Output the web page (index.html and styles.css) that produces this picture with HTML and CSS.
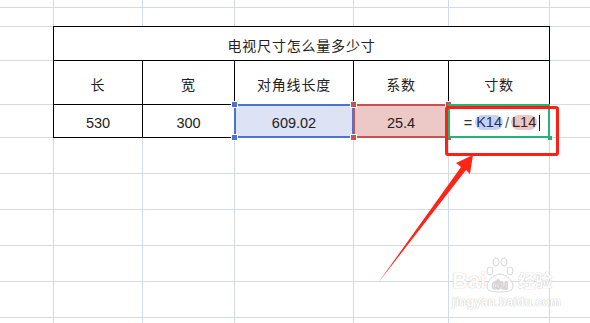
FILE: index.html
```html
<!DOCTYPE html>
<html lang="zh-CN">
<head>
<meta charset="utf-8">
<title>电视尺寸怎么量多少寸</title>
<link rel="stylesheet" href="styles.css">
</head>
<body>
<div class="sheet">
  <div class="tbl">
    <div class="t title">电视尺寸怎么量多少寸</div>
    <div class="t">长</div>
    <div class="t">宽</div>
    <div class="t">对角线长度</div>
    <div class="t">系数</div>
    <div class="t">寸数</div>
    <div class="t num">530</div>
    <div class="t num">300</div>
    <div class="t num ref-blue">609.02<span class="sel sel-blue"><i class="h tl"></i><i class="h bl"></i></span></div>
    <div class="t num ref-red">25.4<span class="sel sel-red"><i class="h tl"></i><i class="h bl"></i><i class="h tr"></i><i class="h br"></i></span></div>
    <div class="t num edit"><span class="formula"><span class="eq">=</span><span class="pill pill-blue">K14</span><span class="slash">/</span><span class="pill pill-red">L14</span><span class="caret"></span></span><span class="sel sel-green"><i class="h br"></i></span></div>
  </div>

  <div class="c"></div><div class="c"></div><div class="c"></div><div class="c"></div><div class="c"></div><div class="c"></div><div class="c"></div>
  <div class="c"></div><div class="c"></div><div class="c"></div><div class="c"></div><div class="c"></div><div class="c"></div><div class="c"></div>
  <div class="c"></div><div class="c"></div>
  <div class="c"></div><div class="c"></div>
  <div class="c"></div><div class="c"></div>
  <div class="c"></div><div class="c"></div><div class="c"></div><div class="c"></div><div class="c"></div><div class="c"></div><div class="c"></div>
  <div class="c"></div><div class="c"></div><div class="c"></div><div class="c"></div><div class="c"></div><div class="c"></div><div class="c"></div>
  <div class="c"></div><div class="c"></div><div class="c"></div><div class="c"></div><div class="c"></div><div class="c"></div><div class="c"></div>
  <div class="c"></div><div class="c"></div><div class="c"></div><div class="c"></div><div class="c"></div><div class="c"></div><div class="c"></div>
  <div class="c"></div><div class="c"></div><div class="c"></div><div class="c"></div><div class="c"></div><div class="c"></div><div class="c"></div>
  <div class="c"></div><div class="c"></div><div class="c"></div><div class="c"></div><div class="c"></div><div class="c"></div><div class="c"></div>

  <div class="callout"></div>
  <svg class="arrow" width="590" height="323" viewBox="0 0 590 323">
    <polygon points="378,283 461,167 456,163 473,155 470,174 466,170" fill="#ff2416"/>
  </svg>

  <div class="wm">
    <div class="wm-top">
      <span class="wm-bai">Bai</span>
      <svg class="wm-paw" width="28" height="36" viewBox="0 0 28 36">
        <g fill="#fff" stroke="#d2d2d2" stroke-width="1">
          <ellipse cx="4" cy="14" rx="3" ry="4"/>
          <ellipse cx="10" cy="5" rx="3" ry="4"/>
          <ellipse cx="18" cy="5" rx="3" ry="4"/>
          <ellipse cx="24" cy="14" rx="3" ry="4"/>
          <path d="M14 17 C20 17 27 24 27 29 C27 34 22 35 14 35 C6 35 1 34 1 29 C1 24 8 17 14 17 Z"/>
        </g>
        <text x="14" y="32" text-anchor="middle" class="wm-du">du</text>
      </svg>
      <span class="wm-jy">经验</span>
    </div>
    <div class="wm-url">jingyan.baidu.com</div>
  </div>
</div>
</body>
</html>
```

FILE: styles.css
```css
html, body {
  margin: 0;
  padding: 0;
  background: #fff;
  overflow: hidden;
}

.sheet {
  position: relative;
  width: 590px;
  height: 323px;
  display: grid;
  grid-template-columns: 53px 88px 91px 118px 94px 100px 40px;
  grid-template-rows: 7px 18px 33px 43px 32px repeat(5, 35px) 5px;
  gap: 1px;
  background: #d5dbe6;
  font-family: "Liberation Sans", "Noto Sans CJK SC", sans-serif;
  color: #222;
}

.c {
  background: #fff;
}

.tbl {
  grid-column: 2 / 7;
  grid-row: 3 / 6;
  margin: -1px;
  border: 1px solid #000;
  background: #000;
  display: grid;
  grid-template-columns: 88px 91px 118px 94px 100px;
  grid-template-rows: 33px 43px 32px;
  gap: 1px;
}

.t {
  position: relative;
  background: #fff;
  display: flex;
  align-items: center;
  justify-content: center;
  padding-top: 3px;
  box-sizing: border-box;
  font-size: 14px;
  letter-spacing: 0.8px;
}

.title {
  grid-column: 1 / -1;
}

.num {
  font-size: 14.5px;
  letter-spacing: 0;
}

.ref-blue {
  background: #dde3f5;
}

.ref-red {
  background: #ecc8c7;
}

.sel {
  position: absolute;
  left: -1px;
  top: -1px;
  right: -1px;
  bottom: -1px;
  border: 2px solid;
}

.sel-blue { border-color: #4b74d2; color: #4b74d2; }
.sel-red { border-color: #c8524e; color: #c8524e; }
.sel-green { border-color: #22b574; color: #22b574; }

.h {
  position: absolute;
  width: 5px;
  height: 5px;
  background: currentColor;
  border: 1px solid #fff;
}
.h.tl { left: -5px; top: -5px; }
.h.bl { left: -5px; bottom: -5px; }
.h.tr { right: -5px; top: -5px; }
.h.br { right: -5px; bottom: -5px; }
.sel-green .h.br { right: -4px; bottom: -4px; width: 4px; height: 4px; border: 0; }

.formula {
  display: flex;
  align-items: center;
  margin-left: 6px;
  font-size: 14.5px;
}

.eq {
  margin-right: 3px;
  color: #333;
}

.pill {
  display: inline-block;
  height: 15px;
  line-height: 15px;
  padding: 0 1px;
  border-radius: 8px;
}

.pill-blue {
  background: #c3d1f2;
  color: #1e2f6a;
}

.pill-red {
  background: #eac6c5;
  color: #3a2222;
}

.slash {
  margin: 0 2px;
  color: #555;
}

.caret {
  display: inline-block;
  width: 1px;
  height: 16px;
  background: #111;
  margin-left: 2px;
}

.callout {
  position: absolute;
  left: 445px;
  top: 106px;
  width: 114px;
  height: 50px;
  box-sizing: border-box;
  border: 3px solid #ff1f14;
  border-radius: 3px;
}

.arrow {
  position: absolute;
  left: 0;
  top: 0;
  pointer-events: none;
}

.wm {
  position: absolute;
  left: 452px;
  top: 257px;
  color: #fff;
  font-family: "Liberation Sans", "Noto Sans CJK SC", sans-serif;
  font-weight: bold;
  text-shadow: 0 0 1px #bcbcbc, 0 0 1px #bcbcbc;
  opacity: 0.85;
}

.wm-top {
  display: flex;
  align-items: flex-end;
  height: 36px;
}

.wm-bai {
  font-size: 22px;
  line-height: 22px;
  margin-bottom: 1px;
}

.wm-paw {
  margin-left: 0;
  display: block;
}

.wm-du {
  font-family: "Liberation Sans", sans-serif;
  font-size: 13px;
  font-weight: bold;
  fill: #fff;
  stroke: #cfcfcf;
  stroke-width: 0.5;
}

.wm-jy {
  font-size: 17px;
  line-height: 20px;
  margin-left: 4px;
  margin-bottom: 1px;
}

.wm-url {
  font-size: 12px;
  line-height: 14px;
  margin-top: 2px;
  letter-spacing: 0.2px;
}
```
